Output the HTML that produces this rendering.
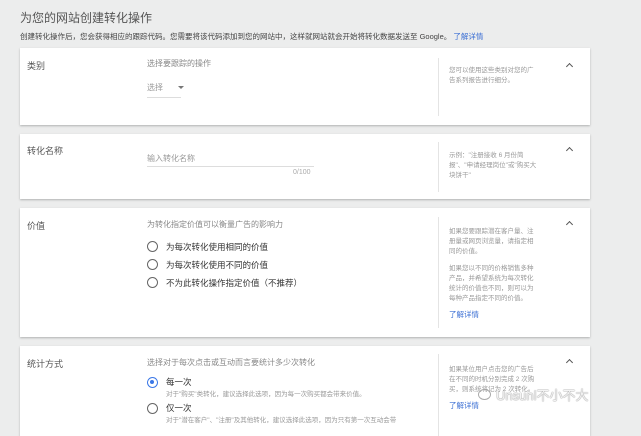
<!DOCTYPE html>
<html><head><meta charset="utf-8"><style>
*{margin:0;padding:0;box-sizing:border-box}
body{width:641px;height:426px;overflow:hidden;background:#eceded;font-family:"Liberation Sans","Noto Sans CJK SC",sans-serif;color:#333;position:relative}
.a{position:absolute;white-space:nowrap}
.card{position:absolute;left:20px;width:570px;background:#fff;box-shadow:0 1px 2px rgba(0,0,0,.25)}
.lab{position:absolute;left:7px;font-size:9px;color:#555}
.mid{position:absolute;left:127px;font-size:8px;color:#888}
.div{position:absolute;left:418px;width:1px;background:#e4e4e4}
.rt{position:absolute;left:429px;font-size:6.5px;color:#999;line-height:10px;white-space:normal;width:90px}
.chev{position:absolute;left:547px;width:5px;height:5px;border-left:1.3px solid #555;border-top:1.3px solid #555;transform:rotate(45deg)}
.radio{position:absolute;left:127px;width:11px;height:11px;border:1.5px solid #666;border-radius:50%}
.rl{position:absolute;left:146px;font-size:8.5px;color:#333}
.link{color:#3b6fd4}
</style></head><body>
<div class="a" style="left:20px;top:9px;font-size:12px;color:#555">为您的网站创建转化操作</div>
<div class="a" style="left:20px;top:31px;font-size:7.5px;color:#444">创建转化操作后，您会获得相应的跟踪代码。您需要将该代码添加到您的网站中，这样就网站就会开始将转化数据发送至 Google。 <span class="link">了解详情</span></div>

<div class="card" style="top:48px;height:77px">
<div class="lab" style="top:11px">类别</div>
<div class="mid" style="top:10px">选择要跟踪的操作</div>
<div class="mid" style="top:34px;color:#999">选择</div>
<div class="a" style="left:158px;top:38px;border-left:3px solid transparent;border-right:3px solid transparent;border-top:3px solid #777"></div>
<div class="a" style="left:127px;top:49px;width:34px;height:1px;background:#ddd"></div>
<div class="div" style="top:10px;height:58px"></div>
<div class="rt" style="top:18px">您可以使用这些类别对您的广告系列报告进行细分。</div>
<div class="chev" style="top:16px"></div>
</div>

<div class="card" style="top:134px;height:65px">
<div class="lab" style="top:10px">转化名称</div>
<div class="mid" style="top:19px;color:#999">输入转化名称</div>
<div class="a" style="left:127px;top:32px;width:167px;height:1px;background:#ddd"></div>
<div class="a" style="left:273px;top:35px;font-size:7px;color:#aaa">0/100</div>
<div class="div" style="top:8px;height:50px"></div>
<div class="rt" style="top:17px">示例："注册接收 6 月份简报"、"申请经理岗位"或"购买大块饼干"</div>
<div class="chev" style="top:14px"></div>
</div>

<div class="card" style="top:208px;height:129px">
<div class="lab" style="top:11px">价值</div>
<div class="mid" style="top:11px">为转化指定价值可以衡量广告的影响力</div>
<div class="radio" style="top:33px"></div><div class="rl" style="top:33px">为每次转化使用相同的价值</div>
<div class="radio" style="top:51px"></div><div class="rl" style="top:51px">为每次转化使用不同的价值</div>
<div class="radio" style="top:69px"></div><div class="rl" style="top:69px">不为此转化操作指定价值（不推荐）</div>
<div class="div" style="top:9px;height:111px"></div>
<div class="rt" style="top:19px">如果您要跟踪潜在客户量、注册量或网页浏览量，请指定相同的价值。</div>
<div class="rt" style="top:56px">如果您以不同的价格销售多种产品，并希望系统为每次转化统计的价值也不同，则可以为每种产品指定不同的价值。</div>
<div class="rt link" style="top:102px;font-size:7.5px;color:#3b6fd4">了解详情</div>
<div class="chev" style="top:14px"></div>
</div>

<div class="card" style="top:346px;height:90px">
<div class="lab" style="top:11px">统计方式</div>
<div class="mid" style="top:11px">选择对于每次点击或互动而言要统计多少次转化</div>
<div class="radio" style="top:31px;border-color:#3b78e7"><div style="position:absolute;left:2px;top:2px;width:4px;height:4px;border-radius:50%;background:#3b78e7"></div></div>
<div class="rl" style="top:30px">每一次</div>
<div class="a" style="left:146px;top:42px;font-size:6.5px;color:#999">对于"购买"类转化，建议选择此选项，因为每一次购买都会带来价值。</div>
<div class="radio" style="top:57px"></div>
<div class="rl" style="top:56px">仅一次</div>
<div class="a" style="left:146px;top:68px;font-size:6.5px;color:#999">对于"潜在客户"、"注册"及其他转化，建议选择此选项，因为只有第一次互动会带</div>
<div class="div" style="top:8px;height:82px"></div>
<div class="rt" style="top:19px">如果某位用户点击您的广告后在不同的时机分别完成 2 次购买，则系统将记为 2 次转化。</div>
<div class="rt link" style="top:55px;font-size:7.5px;color:#3b6fd4">了解详情</div>
<div class="chev" style="top:14px"></div>
</div>

<div class="a" style="left:478px;top:389px;width:13px;height:11px;border:1px solid #aaa;border-radius:50%"></div>
<div class="a" style="left:496px;top:385px;font-size:13px;color:#f4f4f4;text-shadow:0 0 1px #888,0 0 1px #888">Unsunl不小不大</div>
</body></html>
